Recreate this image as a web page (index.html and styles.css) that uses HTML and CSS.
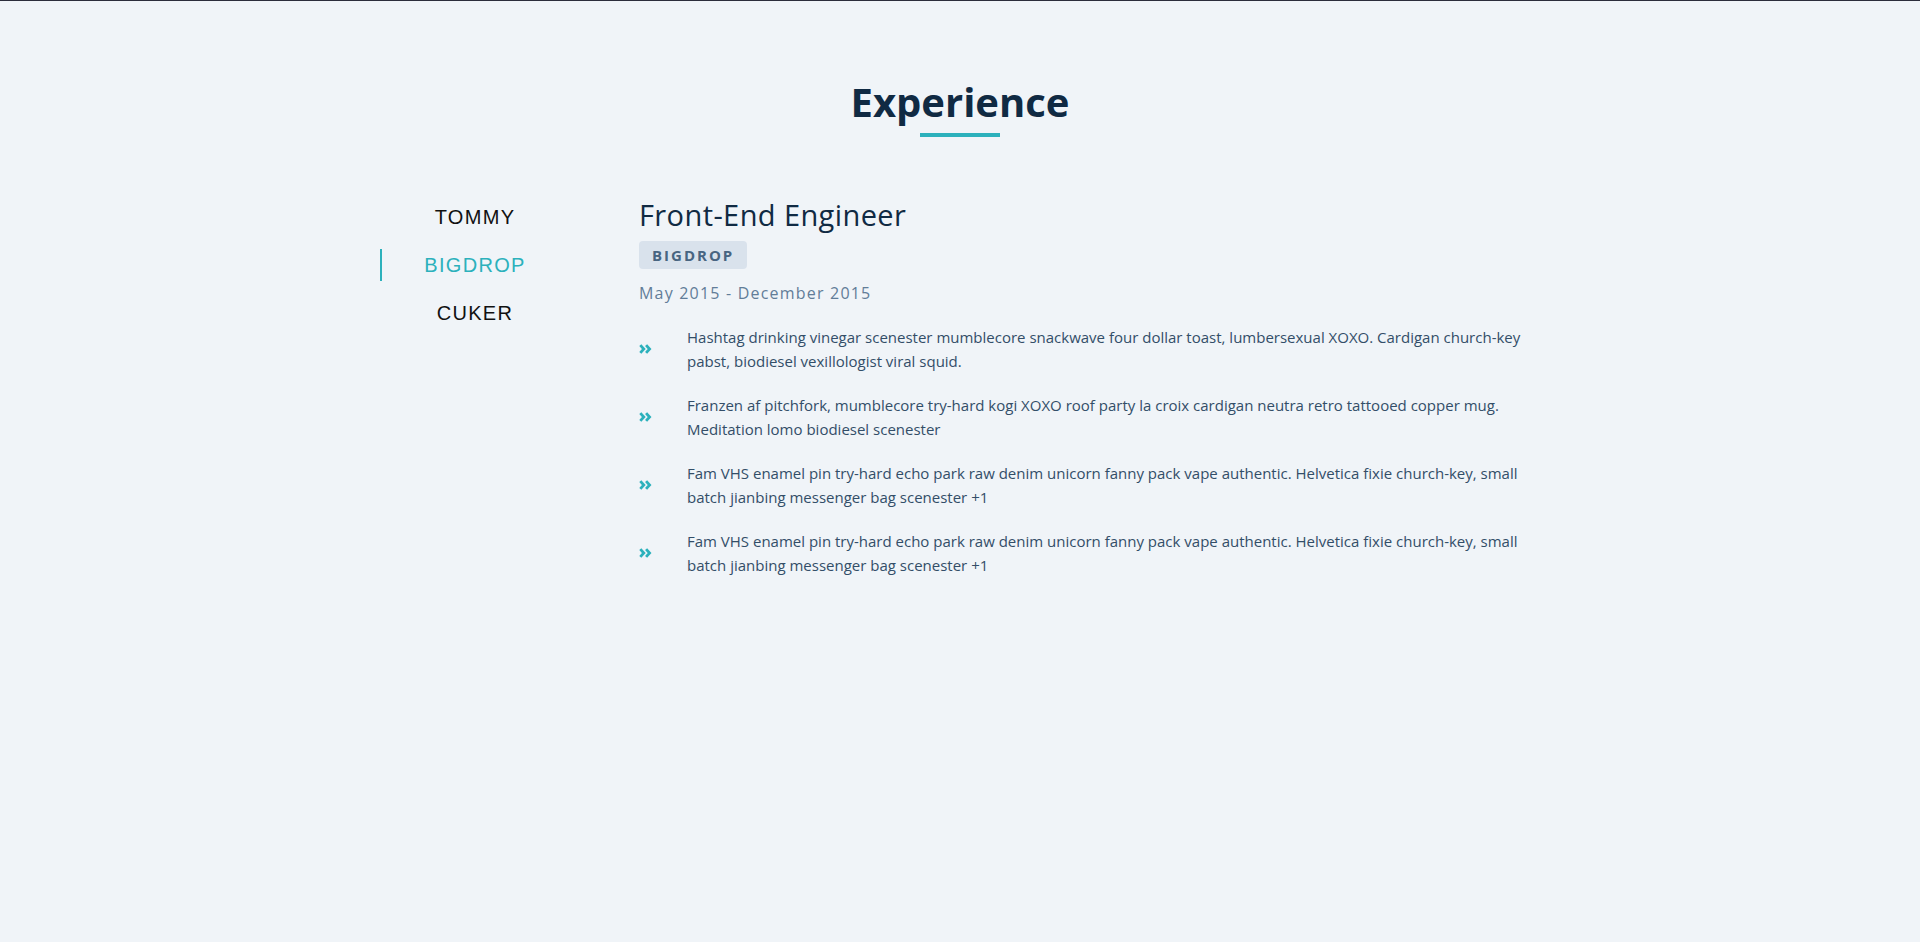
FILE: index.html
```html
<!DOCTYPE html>
<html lang="en">
<head>
<meta charset="utf-8">
<title>Experience</title>
<link rel="stylesheet" href="styles.css">
</head>
<body>
<section class="experience">
  <h2 class="section-title">Experience</h2>
  <div class="title-bar"></div>
  <div class="jobs">
    <ul class="tabs">
      <li class="tab">TOMMY</li>
      <li class="tab active">BIGDROP</li>
      <li class="tab">CUKER</li>
    </ul>
    <div class="job">
      <h3 class="job-title">Front-End Engineer</h3>
      <span class="job-company">BIGDROP</span>
      <p class="job-dates">May 2015 - December 2015</p>
      <ul class="duties">
        <li class="duty">
          <span class="duty-icon"><svg width="13" height="10" viewBox="0 0 13 10"><path d="M1.3 1.1 L4.8 5 L1.3 8.9 M7.1 1.1 L10.6 5 L7.1 8.9" fill="none" stroke="#2cb1bc" stroke-width="2.8" stroke-linejoin="miter"/></svg></span>
          <p class="duty-text">Hashtag drinking vinegar scenester mumblecore snackwave four dollar toast, lumbersexual XOXO. Cardigan church-key pabst, biodiesel vexillologist viral squid.</p>
        </li>
        <li class="duty">
          <span class="duty-icon"><svg width="13" height="10" viewBox="0 0 13 10"><path d="M1.3 1.1 L4.8 5 L1.3 8.9 M7.1 1.1 L10.6 5 L7.1 8.9" fill="none" stroke="#2cb1bc" stroke-width="2.8" stroke-linejoin="miter"/></svg></span>
          <p class="duty-text">Franzen af pitchfork, mumblecore try-hard kogi XOXO roof party la croix cardigan neutra retro tattooed copper mug. Meditation lomo biodiesel scenester</p>
        </li>
        <li class="duty">
          <span class="duty-icon"><svg width="13" height="10" viewBox="0 0 13 10"><path d="M1.3 1.1 L4.8 5 L1.3 8.9 M7.1 1.1 L10.6 5 L7.1 8.9" fill="none" stroke="#2cb1bc" stroke-width="2.8" stroke-linejoin="miter"/></svg></span>
          <p class="duty-text">Fam VHS enamel pin try-hard echo park raw denim unicorn fanny pack vape authentic. Helvetica fixie church-key, small batch jianbing messenger bag scenester +1</p>
        </li>
        <li class="duty">
          <span class="duty-icon"><svg width="13" height="10" viewBox="0 0 13 10"><path d="M1.3 1.1 L4.8 5 L1.3 8.9 M7.1 1.1 L10.6 5 L7.1 8.9" fill="none" stroke="#2cb1bc" stroke-width="2.8" stroke-linejoin="miter"/></svg></span>
          <p class="duty-text">Fam VHS enamel pin try-hard echo park raw denim unicorn fanny pack vape authentic. Helvetica fixie church-key, small batch jianbing messenger bag scenester +1</p>
        </li>
      </ul>
    </div>
  </div>
</section>
</body>
</html>
```
FILE: styles.css
```css
html, body {
  margin: 0;
  padding: 0;
}
body {
  background: #f0f4f8;
  border-top: 1px solid #2b2d3b;
  min-height: 941px;
  box-sizing: border-box;
  font-family: "Open Sans", "Noto Sans", sans-serif;
  color: #334e68;
}
.experience {
  display: flex;
  flex-direction: column;
  align-items: center;
  padding-top: 76px;
}
.section-title {
  margin: 0;
  font-size: 40px;
  line-height: 50px;
  font-weight: 700;
  color: #102a43;
  letter-spacing: 0;
}
.title-bar {
  width: 80px;
  height: 4px;
  margin-top: 6px;
  background: #2cb1bc;
}
.jobs {
  width: 1160px;
  display: flex;
  margin-top: 60px;
}
.tabs {
  list-style: none;
  margin: 4px 0 0 0;
  padding: 0;
  width: 188px;
  display: flex;
  flex-direction: column;
  gap: 16px;
  flex-shrink: 0;
}
.tab {
  height: 32px;
  display: flex;
  align-items: center;
  justify-content: center;
  font-family: "Liberation Sans", Arial, sans-serif;
  font-size: 20px;
  letter-spacing: 1.3px;
  color: #111;
  border-left: 2px solid transparent;
}
.tab.active {
  color: #2cb1bc;
  border-left-color: #2cb1bc;
}
.job {
  margin-left: 71px;
  flex: 1;
  display: flex;
  flex-direction: column;
  align-items: flex-start;
}
.job-title {
  margin: 0;
  font-size: 29px;
  line-height: 36px;
  font-weight: 400;
  letter-spacing: 0.4px;
  color: #102a43;
}
.job-company {
  margin-top: 8px;
  height: 28px;
  padding: 0 13px;
  display: flex;
  align-items: center;
  background: #d9e2ec;
  border-radius: 4px;
  font-size: 15px;
  font-weight: 700;
  letter-spacing: 2px;
  color: #486581;
}
.job-dates {
  margin: 12px 0 0 0;
  font-size: 16px;
  line-height: 24px;
  letter-spacing: 1.2px;
  color: #627d98;
}
.duties {
  list-style: none;
  margin: 20px 0 0 0;
  padding: 0;
  display: flex;
  flex-direction: column;
  gap: 20px;
  width: 100%;
}
.duty {
  display: flex;
  align-items: center;
}
.duty-icon {
  width: 48px;
  flex-shrink: 0;
  display: flex;
  align-items: center;
}
.duty-text {
  margin: 0;
  font-size: 15px;
  line-height: 24px;
  color: #334e68;
}
```
